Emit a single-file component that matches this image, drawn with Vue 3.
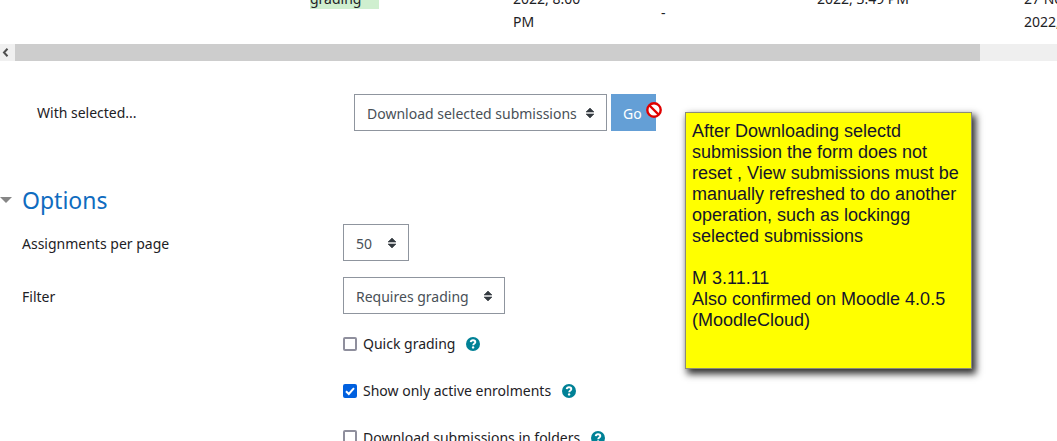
<script setup>
import { ref } from 'vue'

const operation = ref('download')
const perPage = ref('50')
const filter = ref('grading')
const options = ref([
  { id: 'quick', label: 'Quick grading', checked: false },
  { id: 'active', label: 'Show only active enrolments', checked: true },
  { id: 'folders', label: 'Download submissions in folders', checked: false }
])
</script>

<template>
  <main class="page">
    <div class="table-clip">
      <table class="submissions">
        <colgroup>
          <col class="c-lead" /><col class="c-status" /><col class="c-date" /><col class="c-dash" /><col class="c-modified" /><col class="c-last" />
        </colgroup>
        <tbody>
          <tr>
            <td></td>
            <td><div class="status">grading</div></td>
            <td>2022, 8:00<br />PM</td>
            <td class="middle">-</td>
            <td>2022, 3:49 PM</td>
            <td>27 Nov<br />2022,</td>
          </tr>
        </tbody>
      </table>
    </div>

    <div class="scrollbar">
      <button class="scroll-left" type="button" aria-label="Scroll left">
        <svg width="9" height="9" viewBox="0 0 9 9"><path d="M6.5 .8 3 4.5l3.500 3.700" fill="none" stroke="#505050" stroke-width="2" /></svg>
      </button>
      <div class="thumb"></div>
    </div>

    <form class="batch" @submit.prevent>
      <label for="operation">With selected...</label>
      <div class="batch-controls">
        <span class="select w-operation">
          <select id="operation" v-model="operation">
            <option value="download">Download selected submissions</option>
            <option value="lock">Lock submissions</option>
          </select>
          <svg class="arrows" width="8" height="10" viewBox="0 0 8 10"><path d="M4 0 8 4H0zM4 10 0 6h8z" fill="#343a40" stroke="#343a40" stroke-width=".6" /></svg>
        </span>
        <button class="go" type="submit" disabled>
          Go
          <svg class="blocked" width="16" height="16" viewBox="0 0 16 16">
            <circle cx="8" cy="8" r="6.700" fill="#fff" stroke="#e00000" stroke-width="2.400" />
            <path d="M3.500 3.500l9 9" stroke="#e00000" stroke-width="2.400" />
          </svg>
        </button>
      </div>
    </form>

    <form class="options" @submit.prevent>
      <h3>
        <svg class="caret" width="12" height="6" viewBox="0 0 12 6"><path d="M0 0h12L6 6z" fill="#868686" /></svg>
        <a href="#options">Options</a>
      </h3>
      <div class="row">
        <label for="perpage">Assignments per page</label>
        <span class="select w-page">
          <select id="perpage" v-model="perPage">
            <option>50</option>
            <option>100</option>
          </select>
          <svg class="arrows" width="8" height="10" viewBox="0 0 8 10"><path d="M4 0 8 4H0zM4 10 0 6h8z" fill="#343a40" stroke="#343a40" stroke-width=".6" /></svg>
        </span>
      </div>
      <div class="row">
        <label for="filter">Filter</label>
        <span class="select w-filter">
          <select id="filter" v-model="filter">
            <option value="grading">Requires grading</option>
            <option value="none">No filter</option>
          </select>
          <svg class="arrows" width="8" height="10" viewBox="0 0 8 10"><path d="M4 0 8 4H0zM4 10 0 6h8z" fill="#343a40" stroke="#343a40" stroke-width=".6" /></svg>
        </span>
      </div>
      <div class="checks">
        <div v-for="o in options" :key="o.id" class="check-row">
          <input :id="o.id" v-model="o.checked" type="checkbox" />
          <svg v-if="o.checked" class="tick" width="14" height="14" viewBox="0 0 14 14"><path d="M3 7.300l2.800 2.700L11 4.200" fill="none" stroke="#fff" stroke-width="2" /></svg>
          <label :for="o.id">{{ o.label }}</label>
          <button class="help" type="button" :aria-label="'Help with ' + o.label">
            <svg width="14" height="14" viewBox="0 0 14 14">
              <circle cx="7" cy="7" r="7" fill="#008196" />
              <path d="M4.700 5.200C4.900 3.900 5.800 3.300 7 3.300c1.300 0 2.300.7 2.300 1.900C9.300 6.600 7.200 6.600 7.200 8.300" fill="none" stroke="#fff" stroke-width="1.900" />
              <circle cx="7.100" cy="10.400" r="1.200" fill="#fff" />
            </svg>
          </button>
        </div>
      </div>
    </form>

    <aside class="note">
      <p>After Downloading selectd<br />submission the form does not<br />reset , View submissions must be<br />manually refreshed to do another<br />operation, such as lockingg<br />selected submissions</p>
      <p>M 3.11.11<br />Also confirmed on Moodle 4.0.5<br />(MoodleCloud)</p>
    </aside>
  </main>
</template>

<style>
body {
  background: #fff;
  overflow: hidden;
}
</style>

<style scoped>
* {
  box-sizing: border-box;
}
.page {
  position: relative;
  color: #1d2125;
  font: 14px/23px "Noto Sans", "Open Sans", sans-serif;
}
.table-clip {
  display: flex;
  align-items: flex-end;
  height: 44px;
  padding-bottom: 11px;
  overflow: hidden;
}
.submissions {
  flex: none;
  width: 1124px;
  table-layout: fixed;
  border-collapse: collapse;
}
.submissions td {
  padding: 0;
  vertical-align: top;
}
.submissions .middle {
  padding-top: 4px;
  vertical-align: middle;
}
.c-lead { width: 310px; }
.c-status { width: 203px; }
.c-date { width: 148px; }
.c-dash { width: 156px; }
.c-modified { width: 207px; }
.c-last { width: 100px; }
.status {
  width: 69px;
  height: 22px;
  background: #cfefcf;
}
.scrollbar {
  display: flex;
  height: 17px;
  background: #efefef;
}
.scroll-left {
  display: flex;
  align-items: center;
  width: 15px;
  padding: 0 0 0 1px;
  border: 0;
  background: #f0f0f0;
}
.thumb {
  width: calc(100% - 92px);
  background: #cdcdcd;
}
button,
select {
  font: inherit;
}
.batch {
  display: grid;
  grid-template-columns: 317px 1fr;
  align-items: center;
  padding: 33px 0 0 37px;
}
.batch-controls {
  display: flex;
  gap: 4px;
}
.select {
  position: relative;
  display: block;
  height: 37px;
}
.select select {
  width: 100%;
  height: 100%;
  padding: 2px 12px 0;
  border: 1px solid #8f959e;
  border-radius: 0;
  background: #fff;
  color: #495057;
  appearance: none;
}
.arrows {
  position: absolute;
  top: 14px;
  right: 13px;
  pointer-events: none;
}
.w-operation { width: 253px; }
.w-page { width: 66px; }
.w-filter { width: 162px; }
.go {
  position: relative;
  width: 45px;
  height: 37px;
  padding: 2px 12px 0;
  border: 0;
  background: #649fd6;
  color: #fff;
  text-align: left;
}
.blocked {
  position: absolute;
  top: 8px;
  right: -6px;
}
.options {
  padding-left: 22px;
}
h3 {
  display: flex;
  align-items: center;
  height: 36px;
  margin: 51px 0 6px -22px;
  font-size: 23px;
  font-weight: 400;
  line-height: 36px;
}
h3 a {
  margin-left: 10px;
  color: #0f6cbf;
  text-decoration: none;
}
.row {
  display: grid;
  grid-template-columns: 321px 1fr;
  align-items: center;
  margin-bottom: 16px;
}
.row label {
  padding-top: 1px;
}
.checks {
  display: grid;
  gap: 24px;
  padding: 2px 0 0 321px;
}
.check-row {
  position: relative;
  display: flex;
  align-items: center;
  height: 23px;
}
.check-row:last-child {
  height: 22px;
}
.check-row input {
  width: 14px;
  height: 14px;
  margin: 0 6px 0 0;
  border: 2px solid #8f8f9d;
  border-radius: 2px;
  background: #fff;
  appearance: none;
}
.check-row input:checked {
  border-color: #0060df;
  background: #0060df;
}
.tick {
  position: absolute;
  left: 0;
  pointer-events: none;
}
.help {
  display: flex;
  margin-left: 11px;
  padding: 1px 0 0;
  border: 0;
  background: none;
}
.note {
  position: absolute;
  top: 112px;
  left: 685px;
  width: 287px;
  min-height: 257px;
  padding: 8px 6px;
  border: 1px solid #8c8c78;
  background: #ff0;
  box-shadow: 3px 4px 7px 1px #333;
  color: #15152b;
  font: 18px/21px "Liberation Sans", Arial, sans-serif;
  white-space: nowrap;
}
.note p {
  margin: 0 0 21px;
}
</style>
